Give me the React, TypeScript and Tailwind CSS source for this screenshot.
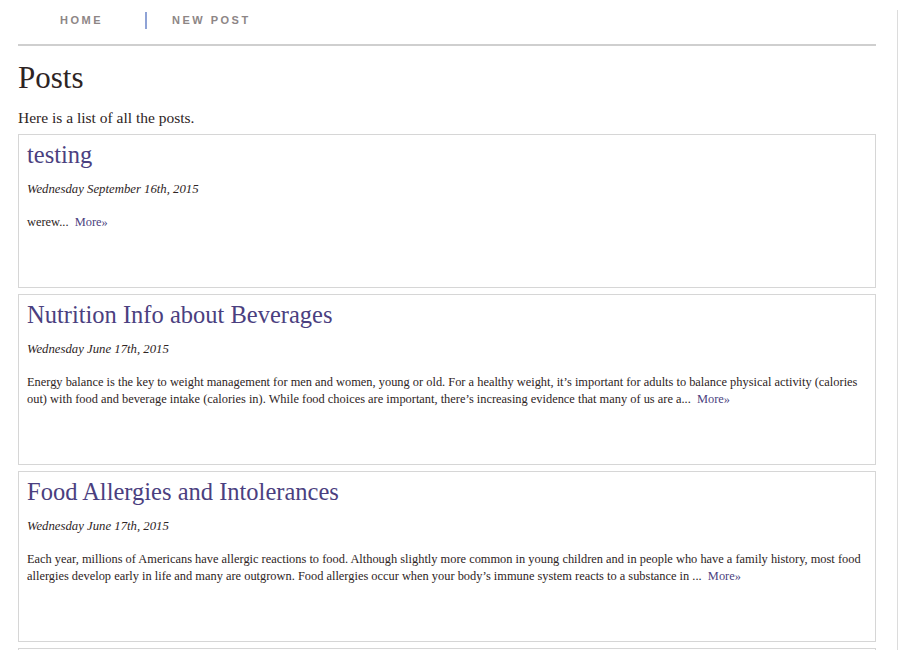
import React from "react";

const posts = [
  {
    title: "testing",
    date: "Wednesday September 16th, 2015",
    body: "werew...",
  },
  {
    title: "Nutrition Info about Beverages",
    date: "Wednesday June 17th, 2015",
    body:
      "Energy balance is the key to weight management for men and women, young or old. For a healthy weight, it\u2019s important for adults to balance physical activity (calories out) with food and beverage intake (calories in). While food choices are important, there\u2019s increasing evidence that many of us are a...",
  },
  {
    title: "Food Allergies and Intolerances",
    date: "Wednesday June 17th, 2015",
    body:
      "Each year, millions of Americans have allergic reactions to food. Although slightly more common in young children and in people who have a family history, most food allergies develop early in life and many are outgrown. Food allergies occur when your body\u2019s immune system reacts to a substance in ...",
  },
  { title: "", date: "", body: "" },
];

export default function App() {
  return (
    <div className="relative h-[650px] w-[900px] overflow-hidden bg-white [font-family:Georgia,'Liberation_Serif',serif]">
      <div className="absolute right-0 top-[10px] h-[640px] w-[3px] border-l border-[#dcdcdc]" />
      <div className="ml-[18px] w-[858px]">
        <nav className="flex h-[46px] items-center border-b-2 border-[#cfcfcf] pb-[4px] [font-family:'Liberation_Sans',Arial,sans-serif]">
          <span className="ml-[42px] text-[11px] font-bold tracking-[2.5px] text-[#8d8686]">HOME</span>
          <span className="ml-[42px] h-[17px] w-[2px] bg-[#8fa3d6]" />
          <span className="ml-[25px] text-[11px] font-bold tracking-[2.5px] text-[#8d8686]">NEW POST</span>
        </nav>
        <h1 className="mt-[14px] text-[31px] leading-[36px] text-[#2e2424]">Posts</h1>
        <p className="mt-[13px] text-[15.5px] leading-[18px] text-[#2e2424]">Here is a list of all the posts.</p>
        <div className="mt-[7px] flex flex-col gap-[6px]">
          {posts.map((p, i) => (
            <div key={i} className="min-h-[153px] border border-[#d6d6d6] pb-[56px] pl-[8px] pr-[5px] pt-[6px]">
              {p.title && (
                <>
                  <h2 className="text-[24.5px] leading-[28px] text-[#4b3f80]">{p.title}</h2>
                  <p className="mt-[12px] text-[12.75px] italic leading-[17px] text-[#2e2424]">{p.date}</p>
                  <p className="mt-[16px] text-[12.4px] leading-[17px] text-[#2e2424]">
                    {p.body}
                    {"\u00a0 "}
                    <a className="text-[#4b3f80]">More»</a>
                  </p>
                </>
              )}
            </div>
          ))}
        </div>
      </div>
    </div>
  );
}
